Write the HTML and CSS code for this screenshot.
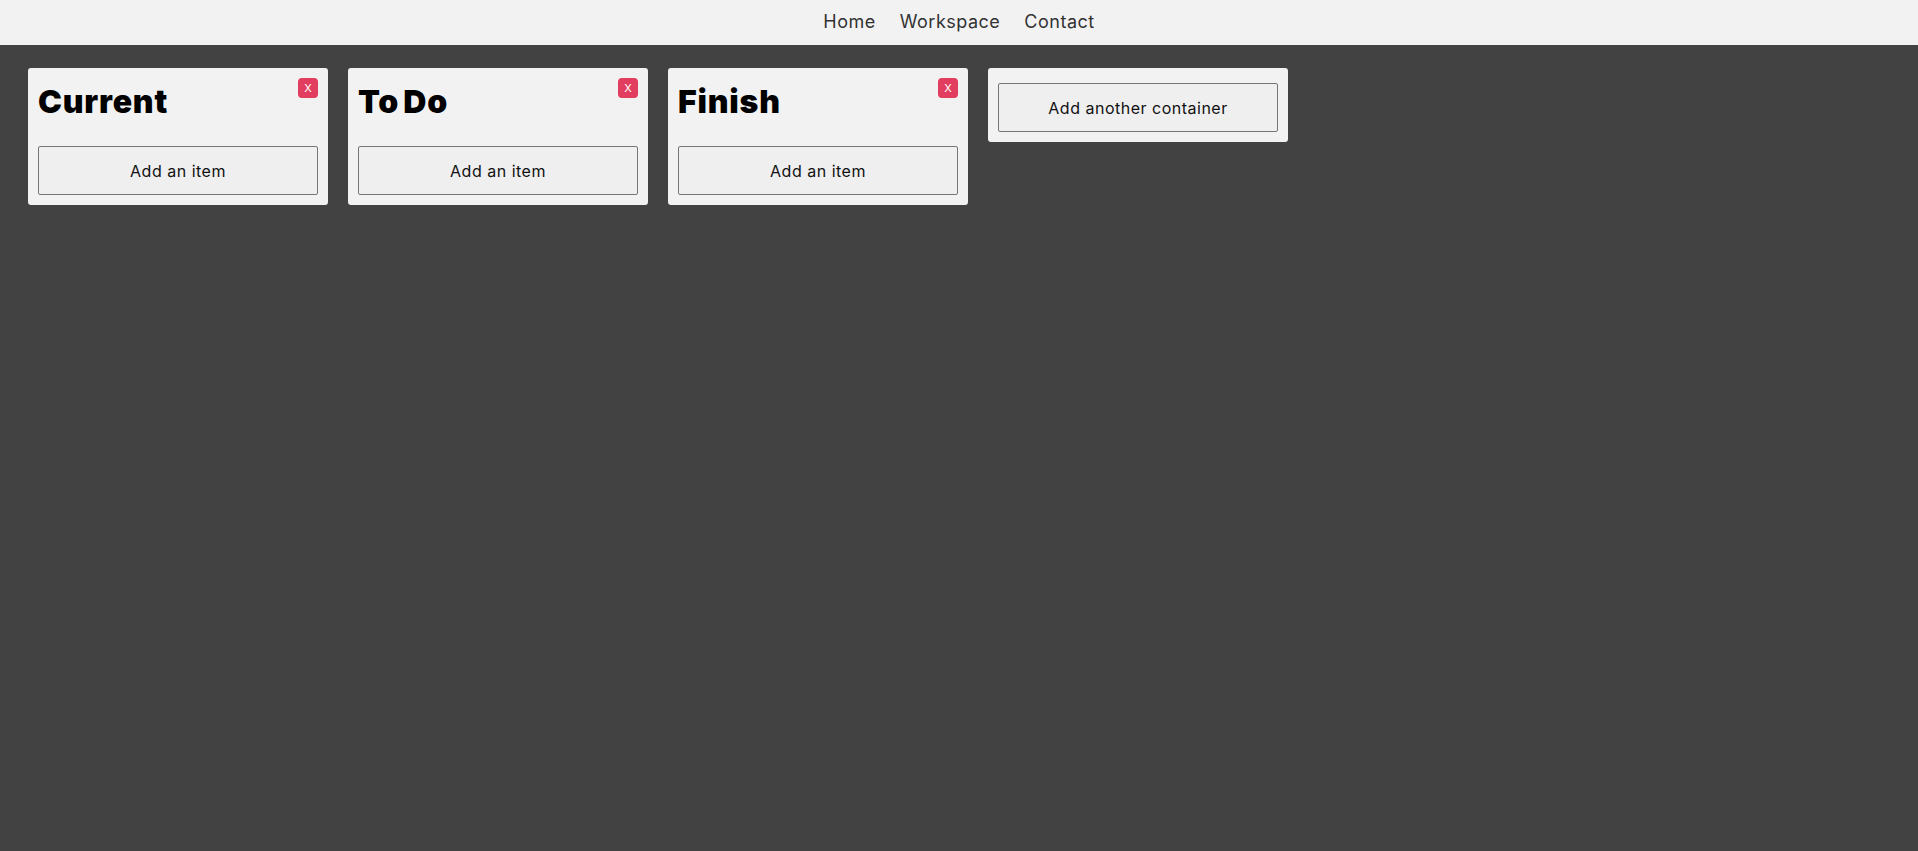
FILE: index.html
```html
<!DOCTYPE html>
<html lang="en">
<head>
<meta charset="utf-8">
<title>Workspace</title>
<link rel="stylesheet" href="styles.css">
</head>
<body>
<header class="topbar">
  <nav class="nav">
    <a class="nav-link" href="#">Home</a>
    <a class="nav-link" href="#">Workspace</a>
    <a class="nav-link" href="#">Contact</a>
  </nav>
</header>
<main class="board">
  <section class="column">
    <button class="close-btn">X</button>
    <h1 class="column-title">Current</h1>
    <button class="add-btn">Add an item</button>
  </section>
  <section class="column">
    <button class="close-btn">X</button>
    <h1 class="column-title">To Do</h1>
    <button class="add-btn">Add an item</button>
  </section>
  <section class="column">
    <button class="close-btn">X</button>
    <h1 class="column-title">Finish</h1>
    <button class="add-btn">Add an item</button>
  </section>
  <section class="column column-add">
    <button class="add-btn">Add another container</button>
  </section>
</main>
</body>
</html>
```

FILE: styles.css
```css
html, body {
  margin: 0;
  padding: 0;
}

body {
  background: #424242;
  font-family: "Inter", "Noto Sans", sans-serif;
  min-height: 851px;
}

.topbar {
  height: 45px;
  background: #f2f2f2;
  display: flex;
  align-items: center;
  justify-content: center;
}

.nav {
  display: flex;
  gap: 24px;
  padding-bottom: 2px;
}

.nav-link {
  color: #333333;
  text-decoration: none;
  font-size: 18px;
  font-weight: 400;
  letter-spacing: 0.5px;
}

.board {
  display: flex;
  align-items: flex-start;
  gap: 20px;
  padding: 23px 28px;
}

.column {
  position: relative;
  width: 300px;
  box-sizing: border-box;
  padding: 10px;
  background: #f2f2f2;
  border-radius: 3px;
  display: flex;
  flex-direction: column;
}

.column-add {
  padding-top: 15px;
}

.column-title {
  margin: 0;
  font-size: 32px;
  line-height: 48px;
  font-weight: 900;
  color: #000;
  letter-spacing: 0.8px;
  word-spacing: -3px;
}

.close-btn {
  position: absolute;
  top: 10px;
  right: 10px;
  width: 20px;
  height: 20px;
  padding: 0;
  border: none;
  border-radius: 4px;
  background: #e13d5f;
  color: #fff;
  font-family: "Inter", "Noto Sans", sans-serif;
  font-size: 11px;
  line-height: 20px;
}

.add-btn {
  margin-top: 20px;
  width: 100%;
  height: 49px;
  box-sizing: border-box;
  padding-bottom: 1px;
  background: #efefef;
  border: 1px solid #767676;
  border-radius: 2px;
  color: #111;
  font-family: "Inter", "Noto Sans", sans-serif;
  font-size: 16px;
  letter-spacing: 0.5px;
}

.column-add .add-btn {
  margin-top: 0;
}
```
